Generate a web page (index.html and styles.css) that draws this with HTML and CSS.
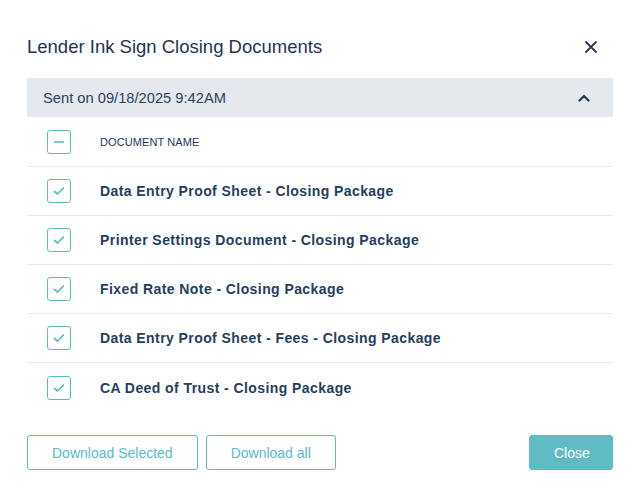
FILE: index.html
```html
<!DOCTYPE html>
<html>
<head>
<meta charset="utf-8">
<link rel="stylesheet" href="styles.css">
</head>
<body>
<div class="modal">
  <div class="modal-header">
    <h1 class="title">Lender Ink Sign Closing Documents</h1>
    <button class="icon-btn close-x" aria-label="Close">
      <svg width="14" height="14" viewBox="0 0 14 14"><path d="M2 2 L12 12 M12 2 L2 12" stroke="#22395a" stroke-width="1.8" stroke-linecap="round" fill="none"/></svg>
    </button>
  </div>
  <div class="group-bar">
    <span class="group-text">Sent on 09/18/2025 9:42AM</span>
    <svg class="chevron" width="12" height="8" viewBox="0 0 12 8"><path d="M1.5 6.5 L6 2 L10.5 6.5" stroke="#22395a" stroke-width="2.2" stroke-linecap="round" stroke-linejoin="round" fill="none"/></svg>
  </div>
  <div class="table">
    <div class="row head">
      <span class="cb"><svg width="24" height="24" viewBox="0 0 24 24"><path d="M7 12 H17" stroke="#5bbcc3" stroke-width="1.6"/></svg></span>
      <span class="col-head">DOCUMENT NAME</span>
    </div>
    <div class="row">
      <span class="cb"><svg width="24" height="24" viewBox="0 0 24 24"><path d="M7.5 12.5 L10.5 15 L16.5 9" stroke="#5bbcc3" stroke-width="1.7" stroke-linecap="round" stroke-linejoin="round" fill="none"/></svg></span>
      <span class="doc">Data Entry Proof Sheet - Closing Package</span>
    </div>
    <div class="row">
      <span class="cb"><svg width="24" height="24" viewBox="0 0 24 24"><path d="M7.5 12.5 L10.5 15 L16.5 9" stroke="#5bbcc3" stroke-width="1.7" stroke-linecap="round" stroke-linejoin="round" fill="none"/></svg></span>
      <span class="doc">Printer Settings Document - Closing Package</span>
    </div>
    <div class="row">
      <span class="cb"><svg width="24" height="24" viewBox="0 0 24 24"><path d="M7.5 12.5 L10.5 15 L16.5 9" stroke="#5bbcc3" stroke-width="1.7" stroke-linecap="round" stroke-linejoin="round" fill="none"/></svg></span>
      <span class="doc">Fixed Rate Note - Closing Package</span>
    </div>
    <div class="row">
      <span class="cb"><svg width="24" height="24" viewBox="0 0 24 24"><path d="M7.5 12.5 L10.5 15 L16.5 9" stroke="#5bbcc3" stroke-width="1.7" stroke-linecap="round" stroke-linejoin="round" fill="none"/></svg></span>
      <span class="doc">Data Entry Proof Sheet - Fees - Closing Package</span>
    </div>
    <div class="row last">
      <span class="cb"><svg width="24" height="24" viewBox="0 0 24 24"><path d="M7.5 12.5 L10.5 15 L16.5 9" stroke="#5bbcc3" stroke-width="1.7" stroke-linecap="round" stroke-linejoin="round" fill="none"/></svg></span>
      <span class="doc">CA Deed of Trust - Closing Package</span>
    </div>
  </div>
  <div class="footer">
    <div class="left-btns">
      <button class="btn outline">Download Selected</button>
      <button class="btn outline">Download all</button>
    </div>
    <button class="btn primary">Close</button>
  </div>
</div>
</body>
</html>
```
FILE: styles.css
```css
* { box-sizing: border-box; }
html, body { margin: 0; padding: 0; background: #fff; }
body {
  font-family: "Liberation Sans", Arial, sans-serif;
  color: #22395a;
  width: 644px;
  height: 496px;
  overflow: hidden;
}
.modal {
  padding: 24px 31px 0 27px;
}
.modal-header {
  height: 46px;
  display: flex;
  align-items: center;
  justify-content: space-between;
  margin-bottom: 8px;
}
.title {
  margin: 0;
  font-size: 18.5px;
  font-weight: normal;
  color: #1f3553;
}
.icon-btn {
  border: none;
  background: none;
  padding: 0;
  width: 14px;
  height: 14px;
  margin-right: 15px;
  display: flex;
}
.group-bar {
  height: 39px;
  background: #e5e9ed;
  display: flex;
  align-items: center;
  justify-content: space-between;
  padding: 0 23px 0 16px;
}
.group-text {
  font-size: 14.7px;
  color: #2b4260;
}
.chevron { display: block; }
.row {
  height: 49px;
  display: flex;
  align-items: center;
  padding-left: 20px;
  border-bottom: 1px solid #e6e8eb;
}
.row.head { height: 50px; }
.row.last { border-bottom: none; }
.cb {
  width: 24px;
  height: 24px;
  border: 1.5px solid #5bbcc3;
  border-radius: 3px;
  display: flex;
  align-items: center;
  justify-content: center;
  margin-right: 29px;
}
.cb svg { display: block; flex: none; }
.col-head {
  font-size: 11px;
  color: #22395a;
  letter-spacing: 0.1px;
}
.doc {
  font-size: 14px;
  font-weight: bold;
  color: #24405e;
  letter-spacing: 0.42px;
}
.footer {
  margin-top: 23px;
  display: flex;
  justify-content: space-between;
  align-items: center;
}
.left-btns {
  display: flex;
  gap: 8px;
}
.btn {
  height: 35px;
  font-family: "Liberation Sans", Arial, sans-serif;
  font-size: 14px;
  border-radius: 3px;
  padding: 0 24px;
  cursor: pointer;
}
.btn.outline {
  background: #fff;
  border: 1px solid #5bbcc3;
  color: #5bbcc3;
}
.btn.primary {
  background: #5fbcc3;
  border: 1px solid #5fbcc3;
  color: #fff;
  width: 84px;
}
```
